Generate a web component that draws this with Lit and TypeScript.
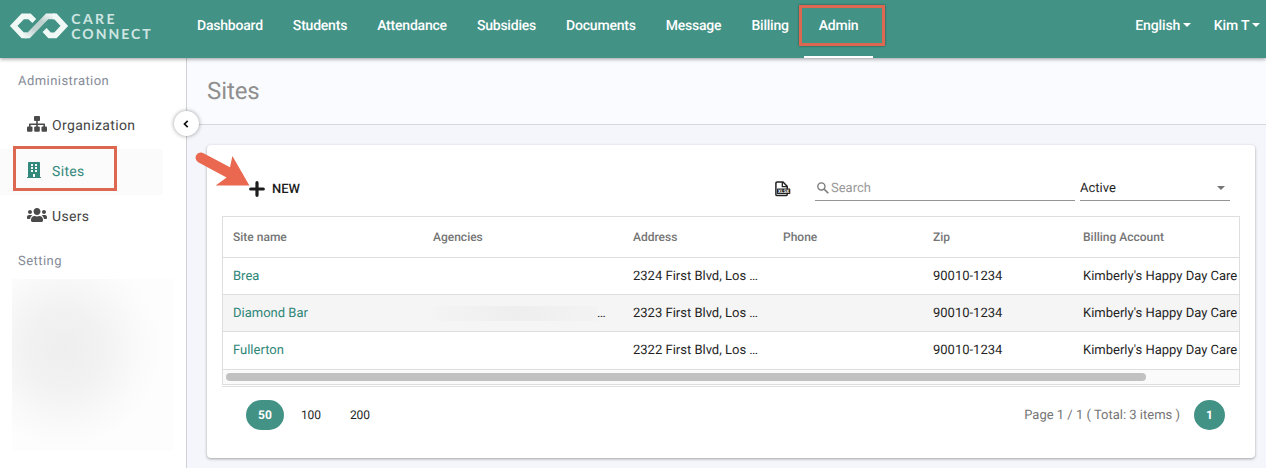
import { css, html, svg, LitElement } from 'lit'
import { customElement, property } from 'lit/decorators.js'
import { classMap } from 'lit/directives/class-map.js'


interface Site {
   name: string
   agencies: string
   address: string
   phone: string
   zip: string
   billing: string
}

const navItems = ['Dashboard', 'Students', 'Attendance', 'Subsidies', 'Documents', 'Message', 'Billing', 'Admin']

const columns = ['Site name', 'Agencies', 'Address', 'Phone', 'Zip', 'Billing Account']

const sites: Site[] = [
   { name: 'Brea', agencies: '', address: '2324 First Blvd, Los …', phone: '', zip: '90010-1234', billing: `Kimberly's Happy Day Care` },
   { name: 'Diamond Bar', agencies: '…', address: '2323 First Blvd, Los …', phone: '', zip: '90010-1234', billing: `Kimberly's Happy Day Care` },
   { name: 'Fullerton', agencies: '', address: '2322 First Blvd, Los …', phone: '', zip: '90010-1234', billing: `Kimberly's Happy Day Care` },
]


//Icons
const orgIcon = svg`
   <svg width="20" height="16" viewBox="0 0 20 16" fill="#4a4a4a">
      <rect x="7" y="0" width="6" height="5" rx="1"/>
      <path d="M9.2 5h1.6v2.4h6.4q.8 0 .8.8V11h-1.6V9h-5.600v2H9.200V9H3.600v2H2V8.200q0-.8.8-.8h6.400z"/>
      <rect x="0" y="10.500" width="5.500" height="5.300" rx="1"/>
      <rect x="7.200" y="10.500" width="5.600" height="5.300" rx="1"/>
      <rect x="14.500" y="10.500" width="5.500" height="5.300" rx="1"/>
   </svg>`

const siteIcon = svg`
   <svg width="14" height="16" viewBox="0 0 448 512" fill="#33897b">
      <path d="M436 480h-20V24c0-13.300-10.700-24-24-24H56C42.700 0 32 10.700 32 24v456H12c-6.600 0-12 5.400-12 12v20h448v-20c0-6.600-5.400-12-12-12zM128 76c0-6.600 5.400-12 12-12h40c6.600 0 12 5.400 12 12v40c0 6.600-5.400 12-12 12h-40c-6.600 0-12-5.400-12-12V76zm0 96c0-6.600 5.400-12 12-12h40c6.600 0 12 5.400 12 12v40c0 6.600-5.400 12-12 12h-40c-6.600 0-12-5.400-12-12v-40zm52 148h-40c-6.600 0-12-5.400-12-12v-40c0-6.600 5.400-12 12-12h40c6.600 0 12 5.400 12 12v40c0 6.600-5.400 12-12 12zm76 160h-64v-84c0-6.600 5.400-12 12-12h40c6.600 0 12 5.400 12 12v84zm64-172c0 6.600-5.400 12-12 12h-40c-6.600 0-12-5.400-12-12v-40c0-6.600 5.400-12 12-12h40c6.600 0 12 5.400 12 12v40zm0-96c0 6.600-5.400 12-12 12h-40c-6.600 0-12-5.400-12-12v-40c0-6.600 5.400-12 12-12h40c6.600 0 12 5.400 12 12v40zm0-96c0 6.600-5.400 12-12 12h-40c-6.600 0-12-5.400-12-12V76c0-6.600 5.400-12 12-12h40c6.600 0 12 5.400 12 12v40z"/>
   </svg>`

const usersIcon = svg`
   <svg width="20" height="16" viewBox="0 0 640 512" fill="#4a4a4a">
      <path d="M96 224c35.300 0 64-28.700 64-64s-28.700-64-64-64-64 28.700-64 64 28.700 64 64 64zm448 0c35.300 0 64-28.700 64-64s-28.700-64-64-64-64 28.700-64 64 28.700 64 64 64zm32 32h-64c-17.600 0-33.500 7.100-45.100 18.600 40.300 22.100 68.900 62 75.100 109.400h66c17.700 0 32-14.300 32-32v-32c0-35.300-28.700-64-64-64zm-256 0c61.900 0 112-50.100 112-112S381.900 32 320 32 208 82.100 208 144s50.100 112 112 112zm76.800 32h-8.300c-20.800 10-43.900 16-68.500 16s-47.600-6-68.500-16h-8.300C179.600 288 128 339.600 128 403.200V432c0 26.500 21.500 48 48 48h288c26.500 0 48-21.500 48-48v-28.800c0-63.600-51.600-115.200-115.200-115.200zm-223.700-13.400C161.500 263.100 145.600 256 128 256H64c-35.300 0-64 28.700-64 64v32c0 17.700 14.300 32 32 32h65.900c6.300-47.400 34.900-87.300 75.200-109.400z"/>
   </svg>`

const plusIcon = svg`
   <svg width="16" height="16" viewBox="0 0 16 16" fill="none" stroke="#1c1c1c" stroke-width="3.200" stroke-linecap="round">
      <path d="M8 1.700v12.600M1.700 8h12.600"/>
   </svg>`

const xlsIcon = svg`
   <svg class="xls" width="16" height="16" viewBox="0 0 16 16">
      <path d="M2.100 1h5.900l4.200 4.200v8.200a1.200 1.200 0 0 1-1.200 1.200H2.100A1.200 1.200 0 0 1 .9 13.400V2.200A1.200 1.200 0 0 1 2.100 1z" fill="#fff" stroke="#222" stroke-width="1.500"/>
      <path d="M7.300 1v4.700h4.900" fill="none" stroke="#222" stroke-width="1.300"/>
      <rect x="2" y="7.400" width="13.300" height="5.600" rx=".6" fill="#222"/>
      <text x="3" y="12" font-size="5" font-weight="700" textLength="11.300" lengthAdjust="spacingAndGlyphs" fill="#fff">XLSX</text>
   </svg>`

const searchIcon = svg`
   <svg width="12" height="12" viewBox="0 0 12 12" fill="none" stroke="#777">
      <circle cx="4.400" cy="4.400" r="3.600" stroke-width="1.300"/>
      <path d="M7.200 7.200l4.100 4.100" stroke-width="1.600"/>
   </svg>`

const chevron = svg`
   <svg width="6" height="8" viewBox="0 0 6 8" fill="none" stroke="#111" stroke-width="1.700">
      <path d="M4.700.8L1.500 4l3.200 3.200"/>
   </svg>`

const logo = svg`
   <svg width="150" height="40" viewBox="0 -6 150 40">
      <defs>
         <linearGradient id="band" x1="0" y1="1" x2="1" y2="0">
            <stop offset="0" stop-color="#eaf3f1"/>
            <stop offset=".3" stop-color="#c3d3d1"/>
            <stop offset=".65" stop-color="#bcd0cd"/>
            <stop offset="1" stop-color="#f2f8f7"/>
         </linearGradient>
      </defs>
      <g fill="none" stroke-width="5.600">
         <path d="M24.300 9L19.500 4.400H12.800L3.700 13.900L12.800 23.400H17.200" stroke="#f1f9f7"/>
         <path d="M14.500 23.400H18.600L37.200 4.400H45" stroke="url(#band)"/>
         <path d="M43 4.400H45.400L54.300 13.900L45.400 23.400H39.600L34.600 18" stroke="#f1f9f7"/>
      </g>
      <g class="logo-text" fill="#cfe6e2">
         <text x="61.300" y="11.800" textLength="43">CARE</text>
         <text x="61.300" y="26.800" textLength="79.200">CONNECT</text>
      </g>
   </svg>`



@customElement('app-header')
export class AppHeader extends LitElement {
   @property({ type: String })
   active = 'Admin'


   render() {
      return html`
         <header>
            <div class="logo">${logo}</div>
            <nav>
               ${navItems.map(item => html`<span class=${classMap({ item: true, on: item === this.active })}>${item}</span>`)}
            </nav>
            <div class="account">
               <span class="drop">English</span>
               <span class="drop">Kim T</span>
            </div>
         </header>`
   }


   static styles = css`

    :host {
      display: block;
      position: relative;
      z-index: 1;
    }

    header {
      display: flex;
      height: 58px;
      background: #439286;
      color: #fff;
      font-size: 14px;
      font-weight: 500;
      letter-spacing: -0.21px;
      box-shadow: 0 1px 4px rgba(0, 0, 0, 0.4);
    }

    .logo {
      width: 172px;
      padding: 6px 0 0 10px;
      box-sizing: border-box;
      margin-right: 10px;
    }

    .logo svg {
      display: block;
    }

    .logo-text {
      font: 700 14px 'Lato', sans-serif;
    }

    nav {
      display: flex;
      flex: 1;
    }

    .item {
      padding: 0 15px;
      line-height: 52px;
      height: 56px;
    }

    .item.on {
      border-bottom: 2px solid #fff;
    }

    .account {
      display: flex;
      gap: 23px;
      padding-right: 6px;
      line-height: 52px;
      letter-spacing: -0.1px;
    }

    .drop {
      display: flex;
      align-items: center;
      height: 52px;
    }

    .drop::after {
      content: '';
      margin: 0 0 2px 2.500px;
      border: 4px solid transparent;
      border-top-color: #fff;
      border-bottom: 0;
    }

   `
}



@customElement('app-sidebar')
export class AppSidebar extends LitElement {

   render() {
      return html`
         <aside>
            <h2>Administration</h2>
            <div class="link"><i>${orgIcon}</i>Organization</div>
            <div class="link on"><i>${siteIcon}</i>Sites</div>
            <div class="link"><i>${usersIcon}</i>Users</div>
            <h2 class="setting">Setting</h2>
            <div class="hidden-links"></div>
         </aside>
         <button aria-label="Collapse">${chevron}</button>`
   }


   static styles = css`

    :host {
      display: block;
      position: relative;
      width: 187px;
      flex: none;
    }

    aside {
      height: 410px;
      box-sizing: border-box;
      background: #fff;
      border-right: 1px solid #cfd1d6;
      padding-top: 14px;
      overflow: hidden;
    }

    h2 {
      margin: 0 0 11px 18px;
      font-size: 13px;
      line-height: 20px;
      font-weight: 400;
      letter-spacing: 0.45px;
      color: #858b98;
    }

    .link {
      display: flex;
      align-items: center;
      height: 46px;
      box-sizing: border-box;
      padding-left: 27px;
      font-size: 14px;
      letter-spacing: 0.35px;
      color: #444;
    }

    .link i {
      display: flex;
      width: 25px;
      padding-bottom: 5px;
    }

    .link.on {
      color: #33897b;
      margin-right: 23px;
      background: #fbfbfb;
    }

    .link.on + .link {
      height: 44px;
    }

    .setting {
      margin: 13px 0 7px 18px;
    }

    .hidden-links {
      width: 162px;
      height: 172px;
      margin-left: 12px;
      background: radial-gradient(ellipse 95px 100px at 52px 70px, #eeeeee, #f2f2f2 40%, #fafafa 80%, #fdfdfd);
    }

    button {
      position: absolute;
      top: 53px;
      right: -12px;
      width: 25px;
      height: 25px;
      padding: 0 1px 0 0;
      display: grid;
      place-items: center;
      border: 0;
      border-radius: 50%;
      background: #fff;
      box-shadow: 0 0 4px rgba(0, 0, 0, 0.4);
    }

   `
}



@customElement('sites-grid')
export class SitesGrid extends LitElement {
   @property({ type: Array })
   rows: Site[] = sites


   render() {
      return html`
         <div class="table">
            <div class="row head">${columns.map(col => html`<span>${col}</span>`)}</div>
            ${this.rows.map(row => html`
               <div class="row">
                  <span class="name">${row.name}</span>
                  <span>${row.agencies ? html`<b class="smudge"></b>${row.agencies}` : ''}</span>
                  <span>${row.address}</span>
                  <span>${row.phone}</span>
                  <span>${row.zip}</span>
                  <span>${row.billing}</span>
               </div>`)}
            <div class="scroll"><div class="thumb"></div></div>
         </div>`
   }


   static styles = css`

    :host {
      display: block;
      border-bottom: 1px solid #e0e0e0;
      padding-bottom: 1px;
    }

    .table {
      border: 1px solid #dedede;
      font-size: 13px;
      color: #1f1f1f;
    }

    .row {
      display: grid;
      grid-template-columns: 200px 200px 150px 150px 150px 1fr;
      height: 37px;
      line-height: 37px;
      box-sizing: border-box;
      border-bottom: 1px solid #dedede;
    }

    .row span {
      height: 36px;
      padding-left: 10px;
      white-space: nowrap;
      overflow: hidden;
    }

    .row.head {
      height: 41px;
      line-height: 40px;
      font-size: 12px;
      font-weight: 500;
      color: #757575;
    }

    .row:nth-child(3) {
      background: #f5f5f5;
    }

    .row:nth-child(4) {
      height: 38px;
    }

    .row .name {
      color: #2e8678;
    }

    .smudge {
      display: inline-block;
      width: 164px;
      height: 15px;
      vertical-align: middle;
      background: linear-gradient(90deg, #f4f4f4, #eeeeee 50%, #f3f3f3);
    }

    .scroll {
      height: 14px;
      box-sizing: border-box;
      padding: 3px;
      background: #fafafa;
    }

    .thumb {
      width: 920px;
      height: 8px;
      border-radius: 4px;
      background: #c1c1c1;
    }

   `
}



@customElement('app-root')
export class AppRoot extends LitElement {

   render() {
      return html`
         <app-header></app-header>
         <div class="body">
            <app-sidebar></app-sidebar>
            <main>
               <h1>Sites</h1>
               <section class="card">
                  <div class="tools">
                     <div class="new">${plusIcon}<span>NEW</span></div>
                     ${xlsIcon}
                     <div class="search">${searchIcon}<span>Search</span></div>
                     <div class="select"><span>Active</span></div>
                  </div>
                  <sites-grid></sites-grid>
                  <footer>
                     <span class="size on">50</span>
                     <span class="size">100</span>
                     <span class="size">200</span>
                     <span class="info">Page 1 / 1 ( Total: 3 items )</span>
                     <span class="page">1</span>
                  </footer>
               </section>
            </main>
         </div>
         <div class="mark mark-admin"></div>
         <div class="mark mark-sites"></div>
         <svg class="arrow" width="58" height="38" viewBox="0 0 58 38" fill="#e9684f">
            <path d="M8.500 3.200L35 17.300L37.400 6L54.400 35.600L20.700 35.400L31.600 27.400L3.200 12.200A5.200 5.200 0 0 1 8.500 3.200z"/>
         </svg>`
   }


   static styles = css`

    :host {
      display: block;
      position: relative;
      width: 1266px;
      height: 468px;
      overflow: hidden;
      font-family: Roboto, sans-serif;
      text-rendering: geometricPrecision;
      background: #f4f6fb;
    }

    .body {
      display: flex;
      height: 410px;
    }

    main {
      flex: 1;
      min-width: 0;
    }

    h1 {
      margin: 0 0 20px;
      height: 67px;
      box-sizing: border-box;
      padding-left: 20px;
      background: #fafbfe;
      border-bottom: 1px solid #d5d8e0;
      font-size: 24px;
      line-height: 66px;
      font-weight: 400;
      letter-spacing: -0.1px;
      color: #8f8f8f;
    }

    .card {
      height: 313px;
      box-sizing: border-box;
      margin: 0 11px 0 20px;
      padding: 0 15px;
      background: #fff;
      border-radius: 4px;
      box-shadow: 0 1px 3px rgba(0, 0, 0, 0.35);
    }

    .tools {
      display: flex;
      align-items: flex-start;
      height: 71px;
      box-sizing: border-box;
      padding: 31px 10px 0 27px;
      font-size: 13px;
      line-height: 24px;
    }

    .new {
      display: flex;
      align-items: center;
      gap: 7px;
      flex: 1;
      height: 26px;
      font-weight: 500;
      color: #1c1c1c;
    }

    .xls {
      margin: 5px 24px 0 0;
      font-family: Roboto, sans-serif;
    }

    .search {
      display: flex;
      align-items: center;
      gap: 2px;
      width: 260px;
      height: 25px;
      box-sizing: border-box;
      padding-left: 2px;
      margin-right: 5px;
      border-bottom: 1px solid #949494;
      color: #999;
    }

    .select {
      display: flex;
      align-items: center;
      justify-content: space-between;
      width: 150px;
      height: 25px;
      box-sizing: border-box;
      padding-right: 5px;
      border-bottom: 1px solid #949494;
      color: #1f1f1f;
    }

    .tools span {
      padding-top: 2px;
    }

    .new span {
      padding-top: 1px;
    }

    .select::after {
      content: '';
      border: 4px solid transparent;
      border-top-color: #757575;
      border-bottom: 0;
    }

    footer {
      display: flex;
      align-items: center;
      padding: 13px 15px 0 24px;
      font-size: 12px;
      line-height: 30px;
      color: #1f1f1f;
    }

    .size {
      width: 38px;
      margin-right: 11px;
      text-align: center;
    }

    .size.on {
      margin-right: 8px;
      border-radius: 15px;
      background: #439286;
      color: #fff;
      font-weight: 700;
    }

    .info {
      margin-left: auto;
      margin-right: 14px;
      padding-top: 1px;
      line-height: 29px;
      color: #757575;
      font-size: 13px;
    }

    .page {
      width: 31px;
      border-radius: 50%;
      background: #439286;
      color: #fff;
      font-weight: 700;
      text-align: center;
    }

    .mark {
      position: absolute;
      z-index: 2;
      box-sizing: border-box;
      border: 3px solid #dc6852;
    }

    .mark-admin {
      left: 799px;
      top: 5px;
      width: 86px;
      height: 41px;
      box-shadow: 0 0 2px rgba(0, 0, 0, 0.5);
    }

    .mark-sites {
      left: 13px;
      top: 146px;
      width: 104px;
      height: 45px;
    }

    .arrow {
      position: absolute;
      z-index: 2;
      left: 195px;
      top: 150px;
    }

   `
}



declare global {
   interface HTMLElementTagNameMap {
      'app-root': AppRoot
      'app-header': AppHeader
      'app-sidebar': AppSidebar
      'sites-grid': SitesGrid
   }
}
